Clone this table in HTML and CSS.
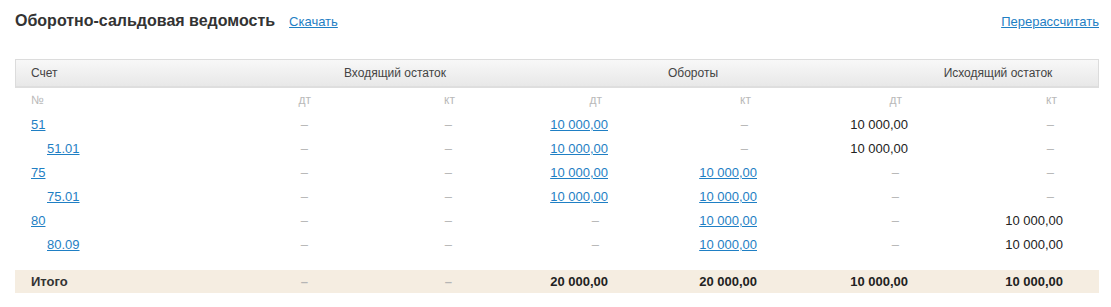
FILE: index.html
```html
<!DOCTYPE html>
<html lang="ru">
<head>
<meta charset="utf-8">
<title>Оборотно-сальдовая ведомость</title>
<link rel="stylesheet" href="styles.css">
</head>
<body>
<div class="page">
  <div class="topbar">
    <div class="title-group">
      <h1 class="title">Оборотно-сальдовая ведомость</h1>
      <a class="link" href="#">Скачать</a>
    </div>
    <a class="link" href="#">Перерассчитать</a>
  </div>

  <div class="head">
    <div class="head-acc">Счет</div>
    <div class="head-grp g1">Входящий остаток</div>
    <div class="head-grp g2">Обороты</div>
    <div class="head-grp g3">Исходящий остаток</div>
  </div>

  <div class="row sub">
    <div class="acc">№</div>
    <div class="num"><span class="lbl">дт</span></div>
    <div class="num"><span class="lbl">кт</span></div>
    <div class="num"><span class="lbl">дт</span></div>
    <div class="num"><span class="lbl">кт</span></div>
    <div class="num"><span class="lbl">дт</span></div>
    <div class="num"><span class="lbl">кт</span></div>
  </div>

  <div class="row">
    <div class="acc"><a class="link" href="#">51</a></div>
    <div class="num"><span class="dash">–</span></div>
    <div class="num"><span class="dash">–</span></div>
    <div class="num"><a class="link" href="#">10 000,00</a></div>
    <div class="num"><span class="dash">–</span></div>
    <div class="num">10 000,00</div>
    <div class="num"><span class="dash">–</span></div>
  </div>
  <div class="row">
    <div class="acc child"><a class="link" href="#">51.01</a></div>
    <div class="num"><span class="dash">–</span></div>
    <div class="num"><span class="dash">–</span></div>
    <div class="num"><a class="link" href="#">10 000,00</a></div>
    <div class="num"><span class="dash">–</span></div>
    <div class="num">10 000,00</div>
    <div class="num"><span class="dash">–</span></div>
  </div>
  <div class="row">
    <div class="acc"><a class="link" href="#">75</a></div>
    <div class="num"><span class="dash">–</span></div>
    <div class="num"><span class="dash">–</span></div>
    <div class="num"><a class="link" href="#">10 000,00</a></div>
    <div class="num"><a class="link" href="#">10 000,00</a></div>
    <div class="num"><span class="dash">–</span></div>
    <div class="num"><span class="dash">–</span></div>
  </div>
  <div class="row">
    <div class="acc child"><a class="link" href="#">75.01</a></div>
    <div class="num"><span class="dash">–</span></div>
    <div class="num"><span class="dash">–</span></div>
    <div class="num"><a class="link" href="#">10 000,00</a></div>
    <div class="num"><a class="link" href="#">10 000,00</a></div>
    <div class="num"><span class="dash">–</span></div>
    <div class="num"><span class="dash">–</span></div>
  </div>
  <div class="row">
    <div class="acc"><a class="link" href="#">80</a></div>
    <div class="num"><span class="dash">–</span></div>
    <div class="num"><span class="dash">–</span></div>
    <div class="num"><span class="dash">–</span></div>
    <div class="num"><a class="link" href="#">10 000,00</a></div>
    <div class="num"><span class="dash">–</span></div>
    <div class="num">10 000,00</div>
  </div>
  <div class="row">
    <div class="acc child"><a class="link" href="#">80.09</a></div>
    <div class="num"><span class="dash">–</span></div>
    <div class="num"><span class="dash">–</span></div>
    <div class="num"><span class="dash">–</span></div>
    <div class="num"><a class="link" href="#">10 000,00</a></div>
    <div class="num"><span class="dash">–</span></div>
    <div class="num">10 000,00</div>
  </div>

  <div class="row total">
    <div class="acc">Итого</div>
    <div class="num"><span class="dash">–</span></div>
    <div class="num"><span class="dash">–</span></div>
    <div class="num">20 000,00</div>
    <div class="num">20 000,00</div>
    <div class="num">10 000,00</div>
    <div class="num">10 000,00</div>
  </div>
</div>
</body>
</html>
```

FILE: styles.css
```css
* { box-sizing: border-box; }

html, body {
  margin: 0;
  padding: 0;
  background: #ffffff;
}

body {
  font-family: "Liberation Sans", Arial, sans-serif;
  font-size: 12px;
  color: #222;
}

.page {
  padding: 0 12px 0 15px;
}

.topbar {
  display: flex;
  justify-content: space-between;
  align-items: baseline;
  padding-top: 11px;
  height: 59px;
}

.title-group {
  display: flex;
  align-items: baseline;
  gap: 14px;
}

.title {
  margin: 0;
  font-size: 16px;
  line-height: 20px;
  font-weight: bold;
  color: #333;
}

.topbar .link {
  font-size: 13px;
}

.link {
  color: #1f7fc4;
  text-decoration: underline;
}

.head {
  display: grid;
  grid-template-columns: 230px 298px 298px 1fr;
  height: 29px;
  align-items: center;
  background: linear-gradient(#f8f8f8, #e8e8e8);
  border: 1px solid #dcdcdc;
  border-bottom: 2px solid #dedede;
  color: #444;
}

.head-acc {
  padding-left: 15px;
}

.head-grp {
  text-align: center;
}

.head-grp.g3 {
  padding-left: 56px;
}

.row {
  display: grid;
  grid-template-columns: 155px 147px 144px 147px 149px 151px 155px;
  padding-right: 36px;
  height: 24px;
  align-items: center;
  font-size: 13px;
}

.acc {
  padding-left: 16px;
}

.acc.child {
  padding-left: 32px;
}

.num {
  text-align: right;
}

.dash {
  color: #b5b5b5;
  padding-right: 9px;
}

.row.sub {
  font-size: 12px;
  color: #b9b9b9;
}

.lbl {
  padding-right: 6px;
}

.total {
  margin-top: 14px;
  height: 23px;
  background: #f5ede1;
  font-weight: bold;
  color: #222;
}

.total .acc {
  color: #333;
}
```
